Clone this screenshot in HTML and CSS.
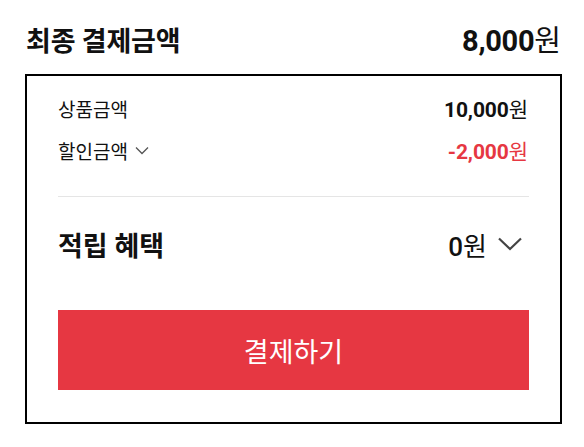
FILE: index.html
```html
<!DOCTYPE html>
<html lang="ko">
<head>
<meta charset="utf-8">
<link rel="stylesheet" href="styles.css">
</head>
<body>
<div class="wrap">
  <div class="total">
    <h2 class="total-label">최종 결제금액</h2>
    <div class="total-price"><b>8,000</b>원</div>
  </div>
  <div class="box">
    <div class="row">
      <span class="label">상품금액</span>
      <span class="price"><b>10,000</b>원</span>
    </div>
    <div class="row">
      <span class="label">할인금액 <svg class="chev-s" width="14" height="9" viewBox="0 0 14 9"><path d="M1 1.5 L7 7.5 L13 1.5" fill="none" stroke="#555" stroke-width="1.3"/></svg></span>
      <span class="price red"><b>-2,000</b>원</span>
    </div>
    <hr class="divider">
    <div class="row benefit">
      <span class="benefit-label">적립 혜택</span>
      <span class="benefit-price"><span><b>0</b>원</span><svg class="chev-l" width="26" height="16" viewBox="0 0 26 16"><path d="M2 2.5 L13 13 L24 2.5" fill="none" stroke="#444" stroke-width="2.2"/></svg></span>
    </div>
    <button class="pay">결제하기</button>
  </div>
</div>
</body>
</html>
```
FILE: styles.css
```css
* { box-sizing: border-box; }
body {
  margin: 0;
  font-family: Roboto, "Noto Sans CJK KR", sans-serif;
  color: #111;
  background: #fff;
}
.wrap {
  padding: 22px 22px 0 25px;
  width: 584px;
}
.total {
  display: flex;
  justify-content: space-between;
  align-items: baseline;
  height: 52px;
}
.total-label {
  margin: 0 0 0 1px;
  font-size: 27px;
  font-weight: 700;
  line-height: 38px;
  letter-spacing: -0.2px;
}
.total-price {
  font-size: 29px;
  font-weight: 400;
  line-height: 38px;
  margin-right: 1px;
}
.total-price b { font-weight: 700; letter-spacing: -0.3px; }
.box {
  border: 2px solid #000;
  width: 537px;
  height: 350px;
  padding: 20px 31px 32px 31px;
}
.row {
  display: flex;
  justify-content: space-between;
  align-items: center;
  height: 24px;
}
.row + .row { margin-top: 18px; }
.label {
  font-size: 19px;
  display: flex;
  align-items: center;
  gap: 7px;
}
.price { font-size: 21px; letter-spacing: -0.1px; margin-right: 1px; }
.price b { font-weight: 700; }
.red { color: #e63742; }
.divider {
  border: 0;
  border-top: 1px solid #e5e5e5;
  margin: 34px 0 32px;
}
.row.benefit { height: 30px; margin-top: 0; }
.benefit-label { font-size: 27px; font-weight: 700; letter-spacing: 0; }
.benefit-price {
  font-size: 26px;
  display: flex;
  align-items: center;
}
.benefit-price b { font-weight: 500; }
.chev-l { margin-left: 10px; margin-right: 6px; }
.pay {
  display: block;
  width: 100%;
  height: 80px;
  margin-top: 51px;
  border: 0;
  background: #e63742;
  color: #fff;
  font-family: Roboto, "Noto Sans CJK KR", sans-serif;
  font-size: 27px;
  font-weight: 400;
}
```
